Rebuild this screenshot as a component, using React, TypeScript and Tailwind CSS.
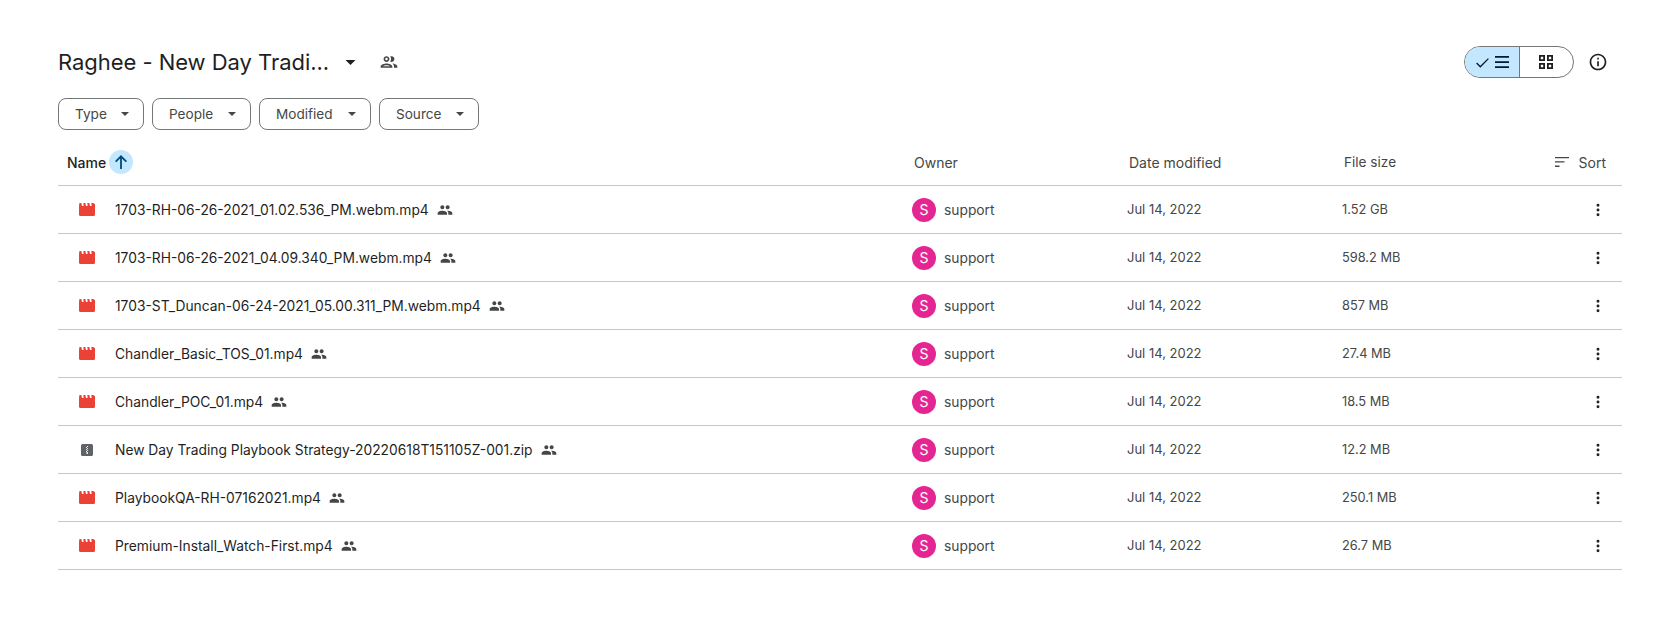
import React from "react";
import { EllipsisVertical } from "lucide-react";

const files = [
  { name: "1703-RH-06-26-2021_01.02.536_PM.webm.mp4", size: "1.52 GB", type: "video" },
  { name: "1703-RH-06-26-2021_04.09.340_PM.webm.mp4", size: "598.2 MB", type: "video" },
  { name: "1703-ST_Duncan-06-24-2021_05.00.311_PM.webm.mp4", size: "857 MB", type: "video" },
  { name: "Chandler_Basic_TOS_01.mp4", size: "27.4 MB", type: "video" },
  { name: "Chandler_POC_01.mp4", size: "18.5 MB", type: "video" },
  { name: "New Day Trading Playbook Strategy-20220618T151105Z-001.zip", size: "12.2 MB", type: "zip" },
  { name: "PlaybookQA-RH-07162021.mp4", size: "250.1 MB", type: "video" },
  { name: "Premium-Install_Watch-First.mp4", size: "26.7 MB", type: "video" },
];

const Caret = ({ className }: { className: string }) => (
  <svg viewBox="0 0 10 5" className={className} fill="currentColor">
    <path d="M0 0l5 5 5-5z" />
  </svg>
);

const VideoIcon = () => (
  <svg viewBox="0 0 16 13" className="h-[13px] w-4" fill="#ea4335">
    <path d="M0 3h16v8.5a1.5 1.5 0 0 1-1.5 1.5h-13A1.5 1.5 0 0 1 0 11.5z" />
    <path d="M0.4 0h1.9l.7 3H0zM4.4 0h1.9l.7 3H4.6zM8.4 0h1.9l.7 3H8.6zM12.4 0h1.9l1.7 1.2V3h-3.4z" />
  </svg>
);

const ZipIcon = () => (
  <svg viewBox="0 0 12 12" className="h-3 w-3">
    <rect width="12" height="12" rx="1.6" fill="#5f6368" />
    <path d="M6 2h1v1H6zM5 3h1v1H5zM6 4h1v1H6zM5 5h1v1H5zM6 6h1v1H6zM5 7h1v1H5zM5.5 8h1.5v2H5.5z" fill="#e8eaed" />
  </svg>
);

const SharedIcon = () => (
  <svg viewBox="0 0 24 24" className="h-4 w-4" fill="#444746">
    <path d="M16 11c1.66 0 2.99-1.34 2.99-3S17.66 5 16 5s-3 1.34-3 3 1.34 3 3 3zm-8 0c1.66 0 2.99-1.34 2.99-3S9.66 5 8 5 5 6.34 5 8s1.34 3 3 3zm0 2c-2.33 0-7 1.17-7 3.5V19h14v-2.5C15 14.17 10.33 13 8 13zm8 0c-.29 0-.62.02-.97.05 1.16.84 1.97 1.97 1.97 3.45V19h6v-2.5c0-2.33-4.67-3.5-7-3.5z" />
  </svg>
);

const PeopleOutline = () => (
  <svg viewBox="0 0 24 24" className="ml-[23px] h-5 w-5" fill="#444746">
    <path d="M9 13.75c-2.34 0-7 1.17-7 3.5V19h14v-1.75c0-2.33-4.66-3.5-7-3.5zM4.34 17c.84-.58 2.87-1.25 4.66-1.25s3.82.67 4.66 1.25H4.34zM9 12c1.93 0 3.5-1.57 3.5-3.5S10.93 5 9 5 5.5 6.57 5.5 8.5 7.07 12 9 12zm0-5c.83 0 1.5.67 1.5 1.5S9.83 10 9 10s-1.5-.67-1.5-1.5S8.17 7 9 7zm7.04 6.81c1.16.84 1.96 1.96 1.96 3.44V19h4v-1.75c0-2.02-3.5-3.17-5.96-3.44zM15 12c1.93 0 3.5-1.57 3.5-3.5S16.93 5 15 5c-.54 0-1.04.13-1.5.35.63.89 1 1.98 1 3.15s-.37 2.26-1 3.15c.46.22.96.35 1.5.35z" />
  </svg>
);

const SortIcon = () => (
  <svg viewBox="0 0 14 10" className="h-[10px] w-[14px]" fill="#444746">
    <path d="M0 0h14v1.3H0zM0 4.3h9.5v1.3H0zM0 8.6h4.5v1.3H0z" />
  </svg>
);

const Chip = ({ label, width }: { label: string; width: string }) => (
  <button className={`flex h-8 items-center justify-between rounded-lg border border-[#747775] pl-[16px] pr-[14px] text-[13.6px] text-[#444746] ${width}`}>
    <span className="pt-px">{label}</span>
    <Caret className="h-[4px] w-[8px] text-[#444746]" />
  </button>
);

export default function App() {
  return (
    <div className="min-h-[634px] bg-white px-[58px] pt-[42px] font-['Inter',sans-serif]">
      <div className="flex h-[40px] items-center justify-between">
        <div className="flex items-center">
          <h1 className="text-[22px] leading-7 tracking-[-0.04px] text-[#1f1f1f]">Raghee - New Day Tradi...</h1>
          <Caret className="ml-[16px] h-[5px] w-[11px] text-[#1f1f1f]" />
          <PeopleOutline />
        </div>
        <div className="flex items-center">
          <div className="flex h-8 w-[110px] overflow-hidden rounded-full border border-[#747775]">
            <div className="flex w-[55px] items-center justify-end gap-[6px] border-r border-[#747775] bg-[#c2e7ff] pr-[10px] text-[#001d35]">
              <svg viewBox="0 0 14 11" className="mt-[2px] h-[10px] w-[13px]" fill="currentColor">
                <path d="M4.6 10.6L0 6l1-1 3.6 3.6L13 .2l1 1z" />
              </svg>
              <svg viewBox="0 0 14 12" className="h-3 w-[14px]" fill="currentColor">
                <path d="M0 0h14v1.7H0zM0 5.2h14v1.7H0zM0 10.3h14V12H0z" />
              </svg>
            </div>
            <div className="flex flex-1 items-center justify-center pr-[2px] text-[#1f1f1f]">
              <svg viewBox="0 0 14 14" className="h-[14px] w-[14px]" fill="none" stroke="currentColor" strokeWidth="1.8">
                <path d="M.9.9h4.2v4.2H.9zM8.9.9h4.2v4.2H8.9zM.9 8.9h4.2v4.2H.9zM8.9 8.9h4.2v4.2H8.9z" />
              </svg>
            </div>
          </div>
          <svg viewBox="0 0 24 24" className="mx-[14px] h-5 w-5 text-[#1f1f1f]" fill="currentColor">
            <path d="M11 7h2v2h-2zm0 4h2v6h-2zm1-9C6.48 2 2 6.48 2 12s4.48 10 10 10 10-4.48 10-10S17.52 2 12 2zm0 18c-4.41 0-8-3.59-8-8s3.59-8 8-8 8 3.59 8 8-3.59 8-8 8z" />
          </svg>
        </div>
      </div>

      <div className="mt-[16px] flex gap-2">
        <Chip label="Type" width="w-[86px]" />
        <Chip label="People" width="w-[99px]" />
        <Chip label="Modified" width="w-[112px]" />
        <Chip label="Source" width="w-[100px]" />
      </div>

      <div className="mt-[9px] grid h-[47px] grid-cols-[856px_215px_215px_1fr] items-center border-b border-[#c7c7c7] text-[14px] text-[#444746]">
        <div className="flex items-center pl-[9px] font-medium text-[#1f1f1f]">
          Name
          <span className="ml-[3px] flex h-6 w-6 items-center justify-center rounded-full bg-[#c2e7ff]">
            <svg viewBox="0 0 12 14" className="h-[14px] w-3" fill="#004a77">
              <path d="M5.1 14V3.4L1.3 7.2 0 6l6-6 6 6-1.3 1.2-3.8-3.8V14z" />
            </svg>
          </span>
        </div>
        <div>Owner</div>
        <div>Date modified</div>
        <div className="flex items-center justify-between">
          <span className="text-[13.6px]">File size</span>
          <span className="flex items-center gap-[10px] pr-[16px]">
            <SortIcon />
            Sort
          </span>
        </div>
      </div>

      {files.map((file) => (
        <div key={file.name} className="grid h-[48px] grid-cols-[854px_215px_215px_1fr] items-center border-b border-[#c7c7c7] text-[13px] text-[#444746]">
          <div className="flex items-center text-[13.8px] text-[#1f1f1f]">
            <div className="flex w-[57px] justify-center pl-px">
              {file.type === "video" ? <VideoIcon /> : <ZipIcon />}
            </div>
            <span className="pt-px">{file.name}</span>
            <span className="ml-[8px]">
              <SharedIcon />
            </span>
          </div>
          <div className="flex items-center gap-2">
            <span className="flex h-6 w-6 items-center justify-center rounded-full bg-[#e52592] text-sm text-white">S</span>
            <span className="pt-px text-[13.8px]">support</span>
          </div>
          <div className="pt-px">Jul 14, 2022</div>
          <div className="flex items-center justify-between">
            <span className="pt-px text-[12.8px]">{file.size}</span>
            <EllipsisVertical className="mr-[16px] h-4 w-4 text-[#1f1f1f]" strokeWidth={2.4} />
          </div>
        </div>
      ))}
    </div>
  );
}
